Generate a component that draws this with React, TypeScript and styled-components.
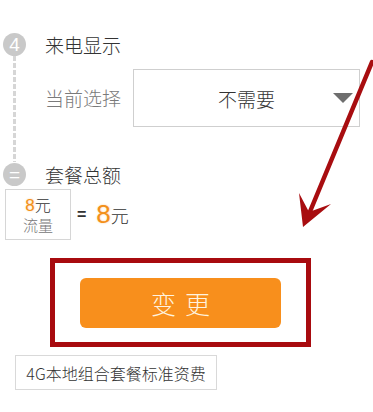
import React from "react";
import styled, { createGlobalStyle } from "styled-components";

const GlobalStyle = createGlobalStyle`
  html, body {
    margin: 0;
    padding: 0;
    background: #fff;
  }
  body {
    font-family: "Noto Sans CJK SC", "Noto Sans", sans-serif;
    font-weight: 300;
    color: #333;
  }
`;

const Page = styled.div`
  position: relative;
  width: 373px;
  height: 412px;
  overflow: hidden;
  background: #fff;
  padding-top: 32px;
  box-sizing: border-box;
`;

const Steps = styled.div`
  padding-left: 3px;
`;

const StepRow = styled.div`
  display: flex;
  align-items: center;
  height: 24px;
`;

const StepDot = styled.div`
  width: 23px;
  height: 23px;
  border-radius: 50%;
  background: #c9c9c9;
  color: #fff;
  display: flex;
  align-items: center;
  justify-content: center;
  font-family: "Liberation Sans", sans-serif;
  font-size: 19px;
  line-height: 1;
`;

const StepTitle = styled.span`
  margin-left: 19px;
  font-size: 19px;
  color: #333;
`;

const StepBody = styled.div`
  display: flex;
  align-items: flex-start;
  margin-left: 10px;
  padding: 13px 0 0 32px;
  height: 106px;
  box-sizing: border-box;
  background: repeating-linear-gradient(
      to bottom,
      #d6d6d6 0,
      #d6d6d6 5px,
      transparent 5px,
      transparent 7px
    )
    left top / 3px 100% no-repeat;
`;

const Label = styled.span`
  font-size: 19px;
  color: #7a7a7a;
  width: 88px;
  line-height: 58px;
`;

const Select = styled.div`
  width: 227px;
  height: 58px;
  border: 1px solid #cfcfcf;
  box-sizing: border-box;
  display: flex;
  align-items: center;
  justify-content: center;
  position: relative;
  font-size: 19px;
  color: #333;
`;

const Caret = styled.span`
  position: absolute;
  right: 6px;
  top: 23px;
  width: 0;
  height: 0;
  border-left: 10px solid transparent;
  border-right: 10px solid transparent;
  border-top: 10px solid #6e6e6e;
`;

const TotalRow = styled.div`
  display: flex;
  align-items: center;
  padding-left: 5px;
  margin-top: 3px;
`;

const PriceBox = styled.div`
  width: 66px;
  height: 51px;
  border: 1px solid #d6d6d6;
  box-sizing: border-box;
  display: flex;
  flex-direction: column;
  align-items: center;
  justify-content: center;
  line-height: 19px;
`;

const Orange = styled.span<{ $size: number }>`
  color: #f3901a;
  font-family: "Liberation Sans", sans-serif;
  font-size: ${(p) => p.$size}px;
  font-weight: 400;
  text-shadow: 0 0 2px rgba(243, 144, 26, 0.45);
`;

const Unit = styled.span<{ $size: number }>`
  color: #333;
  font-size: ${(p) => p.$size}px;
`;

const Small = styled.span`
  font-size: 15px;
  color: #777;
`;

const Equals = styled.span`
  margin-left: 6px;
  margin-right: 10px;
  font-family: "Liberation Sans", sans-serif;
  font-size: 16px;
  font-weight: bold;
  color: #333;
`;

const Total = styled.div`
  display: flex;
  align-items: baseline;
`;

const Highlight = styled.div`
  margin: 18px 0 0 50px;
  width: 261px;
  height: 89px;
  border: 5px solid #a80b0f;
  box-sizing: border-box;
  display: flex;
  align-items: center;
  justify-content: center;
`;

const Button = styled.div`
  width: 201px;
  height: 50px;
  border-radius: 6px;
  background: #f88f1c;
  color: #fff3df;
  font-size: 25px;
  letter-spacing: 9px;
  padding-left: 9px;
  box-sizing: border-box;
  display: flex;
  align-items: center;
  justify-content: center;
`;

const Tag = styled.div`
  margin: 8px 0 0 15px;
  width: 202px;
  height: 35px;
  border: 1px solid #d9d9d9;
  box-sizing: border-box;
  display: flex;
  align-items: center;
  justify-content: center;
  font-size: 16px;
  color: #333;
`;

const ArrowLayer = styled.svg`
  position: absolute;
  left: 0;
  top: 0;
  pointer-events: none;
`;

const App: React.FC = () => {
  return (
    <>
      <GlobalStyle />
      <Page>
        <Steps>
          <StepRow>
            <StepDot>4</StepDot>
            <StepTitle>来电显示</StepTitle>
          </StepRow>
          <StepBody>
            <Label>当前选择</Label>
            <Select>
              不需要
              <Caret />
            </Select>
          </StepBody>
          <StepRow>
            <StepDot>=</StepDot>
            <StepTitle>套餐总额</StepTitle>
          </StepRow>
        </Steps>
        <TotalRow>
          <PriceBox>
            <div>
              <Orange $size={17}>8</Orange>
              <Unit $size={16}>元</Unit>
            </div>
            <Small>流量</Small>
          </PriceBox>
          <Equals>=</Equals>
          <Total>
            <Orange $size={26}>8</Orange>
            <Unit $size={18}>元</Unit>
          </Total>
        </TotalRow>
        <Highlight>
          <Button>变更</Button>
        </Highlight>
        <Tag>4G本地组合套餐标准资费</Tag>
        <ArrowLayer width="373" height="412" viewBox="0 0 373 412">
          <line x1="372" y1="62" x2="309" y2="214" stroke="#a80d10" strokeWidth="4.5" strokeLinecap="round" />
          <path d="M303 227 L299 193 L309 212 L331 204 Z" fill="#a80d10" />
        </ArrowLayer>
      </Page>
    </>
  );
};

export default App;
